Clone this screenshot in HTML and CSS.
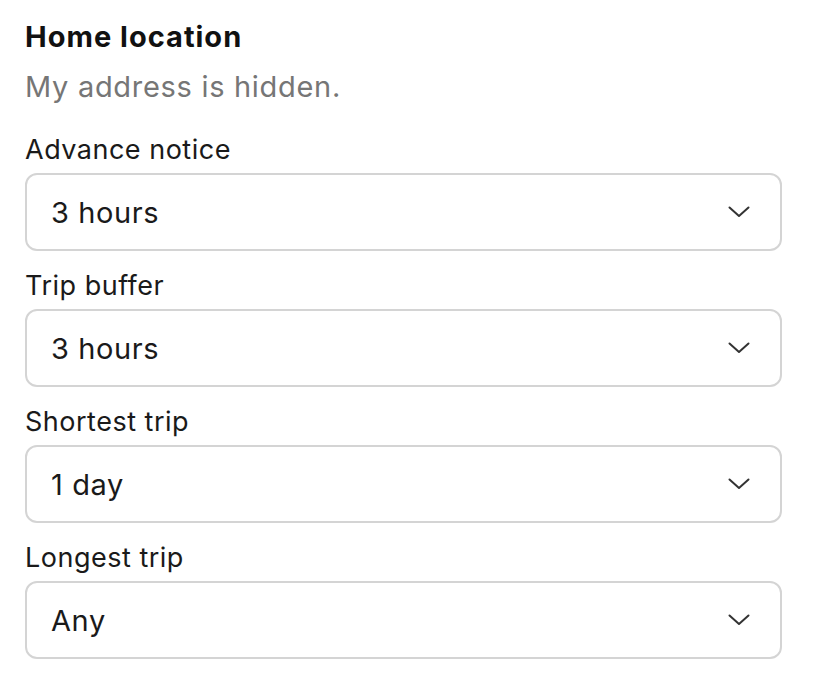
FILE: index.html
```html
<!DOCTYPE html>
<html>
<head>
<meta charset="utf-8">
<link rel="stylesheet" href="styles.css">
</head>
<body>
<div class="panel">
  <h2 class="title">Home location</h2>
  <p class="sub">My address is hidden.</p>

  <div class="field">
    <div class="label">Advance notice</div>
    <div class="select"><span class="value">3 hours</span>
      <svg class="chev" width="22" height="12" viewBox="0 0 22 12"><path d="M1.5 1.5 L11 10 L20.5 1.5" fill="none" stroke="#333" stroke-width="2" stroke-linecap="round" stroke-linejoin="round"/></svg>
    </div>
  </div>

  <div class="field">
    <div class="label">Trip buffer</div>
    <div class="select"><span class="value">3 hours</span>
      <svg class="chev" width="22" height="12" viewBox="0 0 22 12"><path d="M1.5 1.5 L11 10 L20.5 1.5" fill="none" stroke="#333" stroke-width="2" stroke-linecap="round" stroke-linejoin="round"/></svg>
    </div>
  </div>

  <div class="field">
    <div class="label">Shortest trip</div>
    <div class="select"><span class="value">1 day</span>
      <svg class="chev" width="22" height="12" viewBox="0 0 22 12"><path d="M1.5 1.5 L11 10 L20.5 1.5" fill="none" stroke="#333" stroke-width="2" stroke-linecap="round" stroke-linejoin="round"/></svg>
    </div>
  </div>

  <div class="field">
    <div class="label">Longest trip</div>
    <div class="select"><span class="value">Any</span>
      <svg class="chev" width="22" height="12" viewBox="0 0 22 12"><path d="M1.5 1.5 L11 10 L20.5 1.5" fill="none" stroke="#333" stroke-width="2" stroke-linecap="round" stroke-linejoin="round"/></svg>
    </div>
  </div>
</div>
</body>
</html>
```
FILE: styles.css
```css
html, body {
  margin: 0;
  padding: 0;
  background: #fff;
}
body {
  font-family: "Inter", "Liberation Sans", sans-serif;
  color: #121212;
}
.panel {
  padding: 19px 34px 0 25px;
  width: 757px;
}
.title {
  margin: 0;
  font-size: 29px;
  line-height: 36px;
  font-weight: 700;
  letter-spacing: 1px;
  color: #111;
}
.sub {
  margin: 14px 0 0 0;
  font-size: 29px;
  line-height: 36px;
  letter-spacing: 0.7px;
  color: #767676;
}
.field {
  margin-top: 30px;
}
.field + .field {
  margin-top: 20px;
}
.label {
  font-size: 27px;
  line-height: 30px;
  letter-spacing: 0.5px;
  color: #1a1a1a;
}
.select {
  margin-top: 8px;
  height: 78px;
  box-sizing: border-box;
  border: 2px solid #d4d4d4;
  border-radius: 12px;
  display: flex;
  align-items: center;
  justify-content: space-between;
  padding: 0 30px 0 24px;
}
.value {
  font-size: 29px;
  letter-spacing: 0.6px;
  color: #1a1a1a;
}
.chev {
  display: block;
}
```
